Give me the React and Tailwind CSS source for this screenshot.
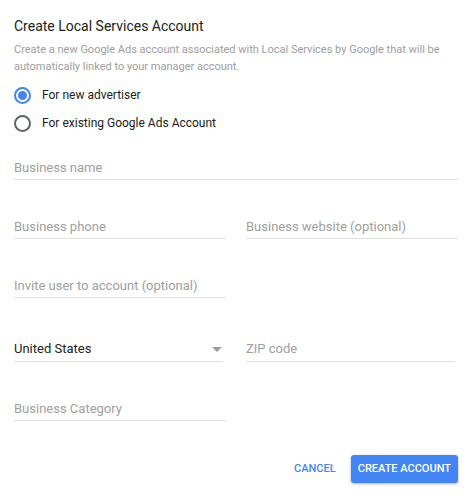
import React, { useState } from "react";

const Field = ({ label, className = "" }) => (
  <div className={`border-b border-[#e0e0e0] pb-[3px] ${className}`}>
    <input
      className="block w-full bg-transparent text-[13px] leading-[16px] text-[#212121] placeholder:text-[#a0a0a0] outline-0"
      placeholder={label}
    />
  </div>
);

const Radio = ({ checked, label, onClick }) => (
  <label className="flex items-center gap-[11px] h-[18px] cursor-pointer" onClick={onClick}>
    <span
      className={`w-[17px] h-[17px] rounded-full border-2 flex items-center justify-center ${
        checked ? "border-[#4285f4]" : "border-[#5f6368]"
      }`}
    >
      {checked && <span className="w-[9px] h-[9px] rounded-full bg-[#4285f4]" />}
    </span>
    <span className="text-[12px] text-[#212121]">{label}</span>
  </label>
);

const App = () => {
  const [mode, setMode] = useState("new");
  return (
    <div className="w-[472px] h-[500px] bg-white px-[14px] pt-[17px] font-['Roboto',sans-serif]">
      <h1 className="text-[14px] leading-[18px] text-[#212121]">Create Local Services Account</h1>
      <p className="mt-[6px] text-[11px] leading-[17px] text-[#9e9e9e]">
        Create a new Google Ads account associated with Local Services by Google that will be
        automatically linked to your manager account.
      </p>

      <div className="mt-[11px] flex flex-col gap-[10px]">
        <Radio checked={mode === "new"} label="For new advertiser" onClick={() => setMode("new")} />
        <Radio checked={mode === "existing"} label="For existing Google Ads Account" onClick={() => setMode("existing")} />
      </div>

      <Field label="Business name" className="mt-[28px]" />

      <div className="mt-[39px] grid grid-cols-2 gap-[20px]">
        <Field label="Business phone" />
        <Field label="Business website (optional)" />
      </div>

      <div className="mt-[39px] grid grid-cols-2 gap-[20px]">
        <Field label="Invite user to account (optional)" />
      </div>

      <div className="mt-[43px] grid grid-cols-2 gap-[20px]">
        <div className="border-b border-[#e0e0e0] pb-[4px] flex items-center pr-[1px] mr-[3px]">
          <span className="flex-1 text-[13px] leading-[16px] text-[#212121]">United States</span>
          <svg width="10" height="5" viewBox="0 0 10 5">
            <path d="M0 0 L10 0 L5 5 Z" fill="#9e9e9e" />
          </svg>
        </div>
        <Field label="ZIP code" className="mr-[3px]" />
      </div>

      <div className="mt-[39px] grid grid-cols-2 gap-[20px]">
        <Field label="Business Category" />
      </div>

      <div className="mt-[34px] flex justify-end items-center gap-[8px]">
        <button className="px-[7px] h-[28px] text-[11px] font-medium text-[#4285f4] uppercase">Cancel</button>
        <button className="px-[7px] h-[28px] rounded-[3px] bg-[#4285f4] text-white text-[11px] font-medium uppercase shadow-[0_1px_3px_rgba(0,0,0,0.3)]">
          Create Account
        </button>
      </div>
    </div>
  );
};

export default App;
